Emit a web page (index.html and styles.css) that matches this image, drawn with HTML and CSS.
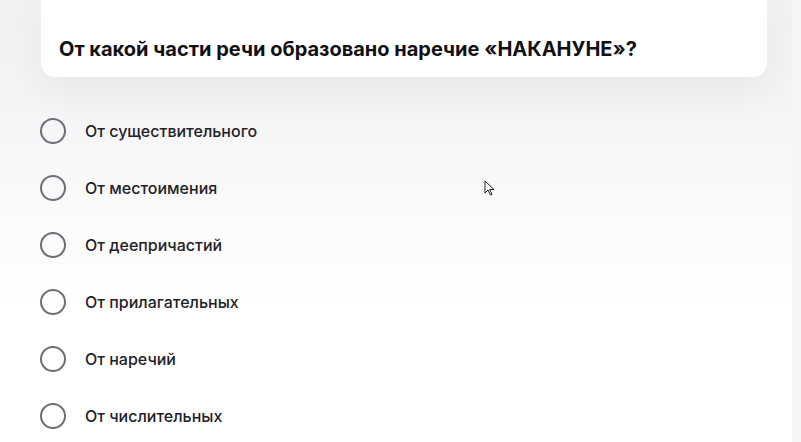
FILE: index.html
```html
<!DOCTYPE html>
<html lang="ru">
<head>
<meta charset="utf-8">
<link rel="stylesheet" href="styles.css">
</head>
<body>
<div class="page">
  <div class="card">
    <h1 class="question">От какой части речи образовано наречие «НАКАНУНЕ»?</h1>
  </div>
  <ul class="options">
    <li class="option"><span class="radio"></span><span class="label">От существительного</span></li>
    <li class="option"><span class="radio"></span><span class="label">От местоимения</span></li>
    <li class="option"><span class="radio"></span><span class="label">От деепричастий</span></li>
    <li class="option"><span class="radio"></span><span class="label">От прилагательных</span></li>
    <li class="option"><span class="radio"></span><span class="label">От наречий</span></li>
    <li class="option"><span class="radio"></span><span class="label">От числительных</span></li>
  </ul>
  <div class="scroll-strip"></div>
  <svg class="cursor" width="12" height="16" viewBox="0 0 12 16">
    <path d="M1 1 L1 13 L4 10 L6.5 15 L8 14.3 L5.6 9.5 L10 9.5 Z" fill="#fff" stroke="#222" stroke-width="1" stroke-linejoin="round"/>
  </svg>
</div>
</body>
</html>
```

FILE: styles.css
```css
html, body {
  margin: 0;
  padding: 0;
}
body {
  width: 801px;
  height: 442px;
  overflow: hidden;
  background: #ffffff;
  font-family: "Inter", "Liberation Sans", sans-serif;
}
.page {
  position: relative;
  width: 801px;
  height: 442px;
  overflow: hidden;
  background: linear-gradient(180deg, #f1f1f3 0px, #f4f4f6 90px, #fafafb 200px, #ffffff 300px);
}
.card {
  margin-left: 41px;
  width: 726px;
  height: 77px;
  box-sizing: border-box;
  background: #ffffff;
  border-radius: 0 0 14px 14px;
  padding: 36px 0 0 18px;
  box-shadow: 0 16px 40px rgba(20, 20, 40, 0.05);
}
.question {
  margin: 0;
  font-size: 20px;
  font-weight: 700;
  line-height: 26px;
  color: #111114;
  letter-spacing: 0;
}
.options {
  list-style: none;
  margin: 25px 0 0 0;
  padding: 0 0 0 40px;
}
.option {
  height: 57px;
  display: flex;
  align-items: center;
  gap: 19px;
}
.radio {
  width: 26px;
  height: 26px;
  box-sizing: border-box;
  border: 2.5px solid #6f6e78;
  border-radius: 50%;
  flex: none;
}
.label {
  font-size: 16px;
  font-weight: 500;
  color: #222226;
}
.scroll-strip {
  position: absolute;
  top: 0;
  right: 0;
  width: 9px;
  height: 442px;
  background: #f6f6f8;
}
.cursor {
  position: absolute;
  left: 484px;
  top: 180px;
}
```
